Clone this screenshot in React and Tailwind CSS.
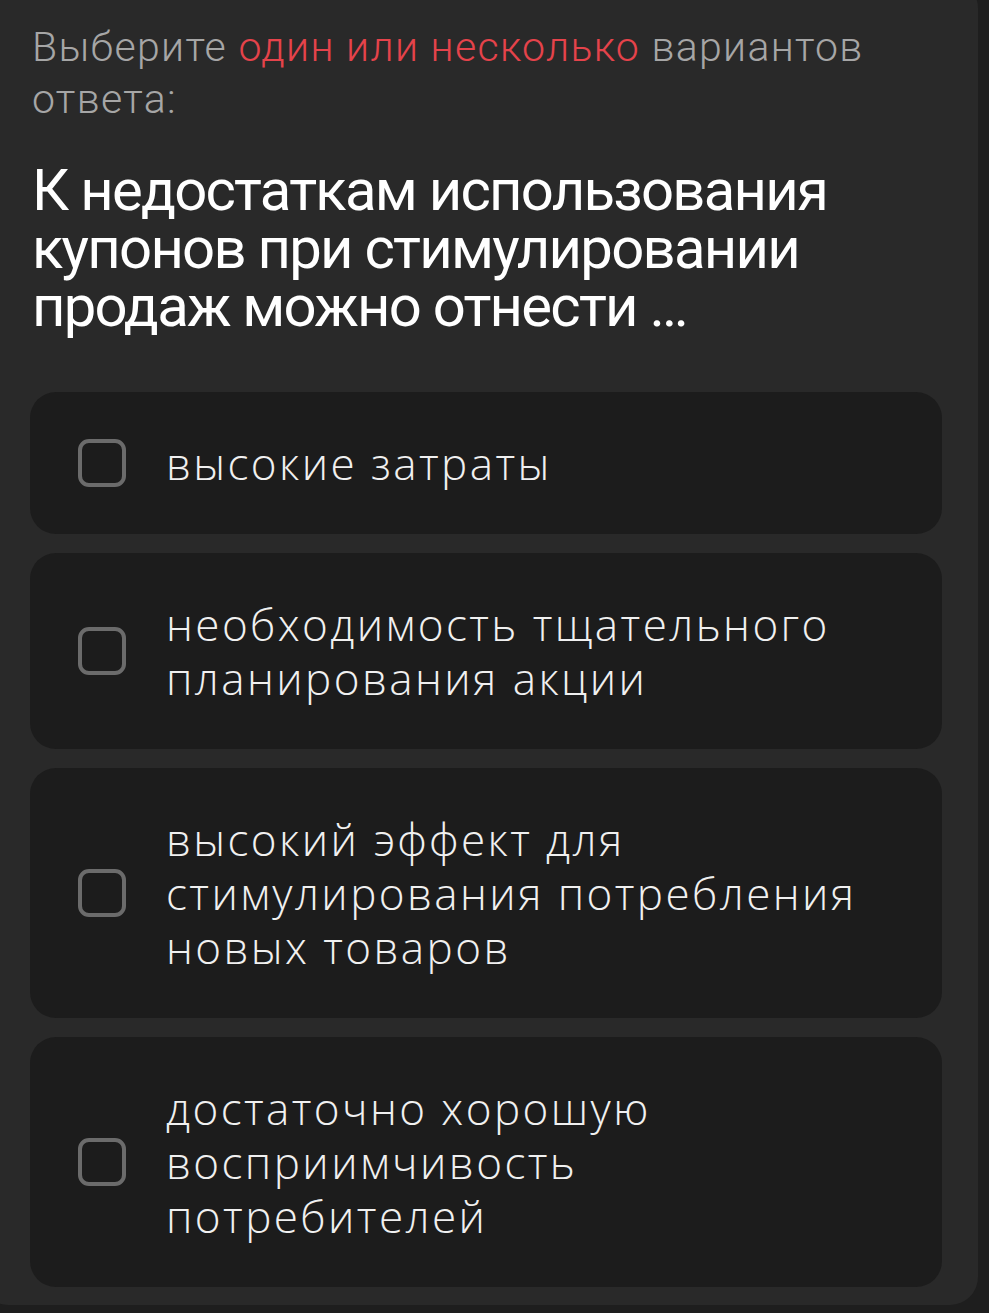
const options = [
  'высокие затраты',
  'необходимость тщательного планирования акции',
  'высокий эффект для стимулирования потребления новых товаров',
  'достаточно хорошую восприимчивость потребителей',
]

function Checkbox() {
  return (
    <span className="block w-[48px] h-[48px] shrink-0 rounded-[11px] border-[4px] border-[#6b6b6b]" />
  )
}

export default function App() {
  return (
    <div className="min-h-[1313px] w-[989px] bg-[#1e1e1e] overflow-hidden">
      <div className="-mt-[20px] -ml-[20px] w-[998px] rounded-[28px] bg-[#292929] pt-[41px] pb-[18px] pl-[50px] pr-[36px]">
        <p
          className="ml-[2px] text-[41px] leading-[52px] font-light tracking-[0.032em] text-[#a6a6a6]"
          style={{ fontFamily: 'Roboto, sans-serif' }}
        >
          Выберите <span className="text-[#e5434b]">один или несколько</span> вариантов ответа:
        </p>
        <h1
          className="ml-[2px] mt-[36px] text-[58px] leading-[58px] tracking-[-0.03em] text-white"
          style={{ fontFamily: 'Roboto, sans-serif' }}
        >
          К недостаткам использования купонов при стимулировании продаж можно отнести …
        </h1>

        <div className="mt-[57px] flex flex-col gap-[19px]">
          {options.map((text) => (
            <label
              key={text}
              className="flex items-center gap-[40px] rounded-[26px] bg-[#1c1c1c] pl-[48px] pr-[42px] py-[44px]"
            >
              <Checkbox />
              <span
                className="text-[44px] leading-[54px] font-light tracking-[0.055em] text-[#f0f0f0]"
                style={{ fontFamily: '"Open Sans", sans-serif' }}
              >
                {text}
              </span>
            </label>
          ))}
        </div>
      </div>
    </div>
  )
}
